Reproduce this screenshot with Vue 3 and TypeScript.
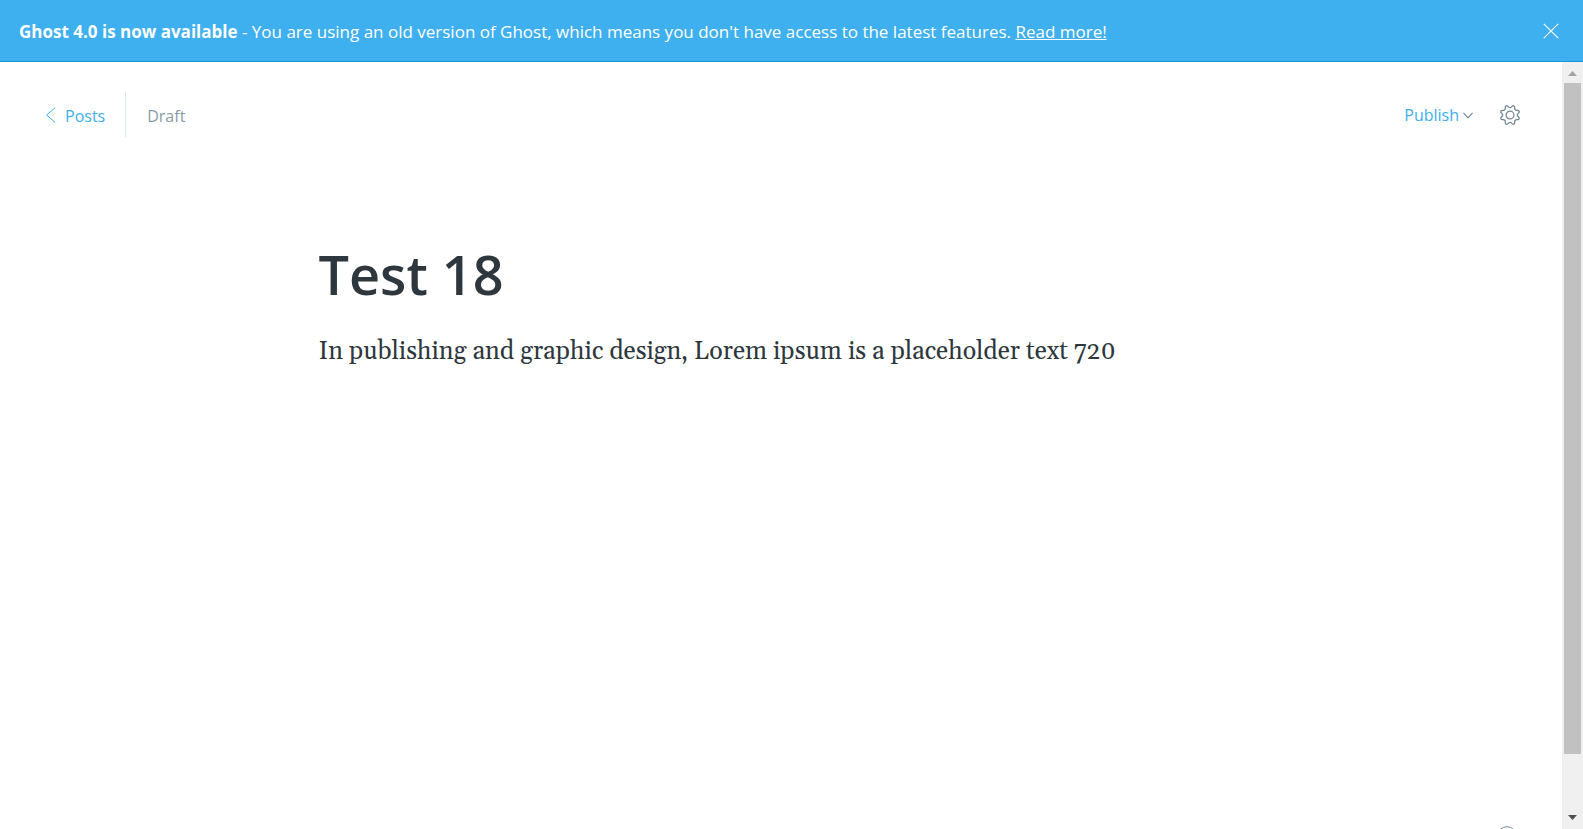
<script setup lang="ts">
import { ref } from 'vue'

const title = ref<string>('Test 18')
const body = ref<string>('In publishing and graphic design, Lorem ipsum is a placeholder text 720')
const showBanner = ref<boolean>(true)
</script>

<template>
  <div class="app">
    <aside v-if="showBanner" class="banner">
      <p class="banner-text">
        <strong>Ghost 4.0 is now available</strong> - You are using an old version of Ghost, which means you don't have access to the latest features. <a href="#">Read more!</a>
      </p>
      <button class="close" type="button" aria-label="Close" @click="showBanner = false">
        <svg width="16" height="16" viewBox="0 0 16 16"><path d="M.8.8l14.4 14.4M15.2.8L.8 15.2" /></svg>
      </button>
    </aside>
    <div class="view">
      <main class="editor">
        <header class="toolbar">
          <a class="back" href="#">
            <svg width="10" height="16" viewBox="0 0 10 16"><path d="M9.2.6L.6 8l8.6 7.4" /></svg>
            <span>Posts</span>
          </a>
          <span class="status">Draft</span>
          <div class="actions">
            <button class="publish" type="button">
              <span>Publish</span>
              <svg width="10" height="7" viewBox="0 0 10 7"><path d="M.4.8L5 5.9 9.6.8" /></svg>
            </button>
            <button class="settings" type="button" aria-label="Settings">
              <svg width="22" height="22" viewBox="0 0 22 22">
                <circle cx="11" cy="11" r="3.9" />
                <path d="M11 3.7C12.8 3.7 13 1.1 14.8 1.8C16.6 2.5 15 4.6 16.2 5.8C17.4 7 19.5 5.4 20.2 7.2C20.9 9 18.3 9.2 18.3 11C18.3 12.8 20.9 13 20.2 14.8C19.5 16.6 17.4 15 16.2 16.2C15 17.4 16.6 19.5 14.8 20.2C13 20.9 12.8 18.3 11 18.3C9.2 18.3 9 20.9 7.2 20.2C5.4 19.5 7 17.4 5.8 16.2C4.6 15 2.5 16.6 1.8 14.8C1.1 13 3.7 12.8 3.7 11C3.7 9.2 1.1 9 1.8 7.2C2.5 5.4 4.6 7 5.8 5.8C7 4.6 5.4 2.5 7.2 1.8C9 1.1 9.2 3.7 11 3.7Z" />
              </svg>
            </button>
          </div>
        </header>
        <div class="post">
          <input v-model="title" class="title" type="text" aria-label="Post title" />
          <textarea v-model="body" class="body" rows="2" aria-label="Post content"></textarea>
        </div>
        <a class="help" href="#" aria-label="Help">
          <svg width="20" height="20" viewBox="0 0 20 20"><circle cx="10" cy="10" r="9.3" /></svg>
        </a>
      </main>
      <div class="scrollbar" aria-hidden="true">
        <svg class="arrow up" width="21" height="21" viewBox="0 0 21 21"><path d="M6 14L10.5 9L15 14Z" /></svg>
        <div class="track"><div class="thumb"></div></div>
        <svg class="arrow down" width="21" height="21" viewBox="0 0 21 21"><path d="M6 7L10.5 12L15 7Z" /></svg>
      </div>
    </div>
  </div>
</template>

<style>
body {
  margin: 0;
  background: #fff;
}
</style>

<style scoped>
.app {
  display: flex;
  flex-direction: column;
  height: 100vh;
  overflow: hidden;
  font-family: "Open Sans", "Noto Sans", sans-serif;
  color: #2e373d;
}
svg {
  display: block;
  flex: none;
  fill: none;
  stroke: currentColor;
}
button {
  border: 0;
  padding: 0;
  background: none;
  font: inherit;
  cursor: pointer;
}
.banner {
  display: flex;
  align-items: center;
  justify-content: space-between;
  flex: none;
  box-sizing: border-box;
  height: 62px;
  padding: 0 24px 0 19px;
  border-bottom: 1px solid #1a93dc;
  background: #3eb0ef;
  color: #fff;
}
.banner-text {
  margin: 0;
  padding-top: 2px;
  font-size: 17px;
  line-height: 24px;
}
.banner-text a {
  color: inherit;
}
.close {
  color: #fff;
}
.close svg,
.publish svg {
  stroke-width: 1.2;
}
.view {
  display: flex;
  flex: 1;
  min-height: 0;
}
.editor {
  position: relative;
  flex: 1;
  min-width: 0;
  overflow: hidden;
}
.toolbar {
  display: flex;
  align-items: center;
  height: 45px;
  padding: 30px 41px 0 46px;
  font-size: 16px;
  line-height: 24px;
}
.back {
  display: flex;
  align-items: center;
  gap: 9px;
  height: 45px;
  padding-right: 20px;
  border-right: 1px solid #dfe8ef;
  color: #3eb0ef;
  text-decoration: none;
}
.status {
  padding-left: 21px;
  color: #8a9ba6;
}
.back span,
.status {
  padding-top: 2px;
}
.actions {
  display: flex;
  align-items: center;
  gap: 26px;
  margin-left: auto;
}
.publish {
  display: flex;
  align-items: center;
  gap: 4px;
  color: #3eb0ef;
}
.publish svg {
  margin-top: 2px;
}
.publish svg,
.settings,
.help {
  color: #738a94;
}
.settings svg {
  stroke-width: 1.3;
}
.post {
  display: flex;
  flex-direction: column;
  gap: 16px;
  max-width: 925px;
  margin: 0 auto;
  padding-top: 95px;
}
.title,
.body {
  width: 100%;
  box-sizing: border-box;
  margin: 0;
  border: 0;
  padding: 0;
  outline: 0;
  resize: none;
  background: none;
  color: #2e373d;
}
.title {
  height: 84px;
  font: 600 54px/84px "Open Sans", "Noto Sans", sans-serif;
}
.body {
  overflow: hidden;
  font: 25px/40px Gelasio, Georgia, "Liberation Serif", serif;
}
.help {
  position: absolute;
  right: 45px;
  bottom: -17px;
}
.scrollbar {
  display: flex;
  flex-direction: column;
  flex: none;
  width: 21px;
  background: #f0f0f0;
}
.arrow {
  stroke: none;
}
.up {
  fill: #a3a3a3;
}
.down {
  fill: #505050;
}
.track {
  flex: 1;
  padding: 0 2px;
}
.thumb {
  height: 92.5%;
  background: #c1c1c1;
}
</style>
